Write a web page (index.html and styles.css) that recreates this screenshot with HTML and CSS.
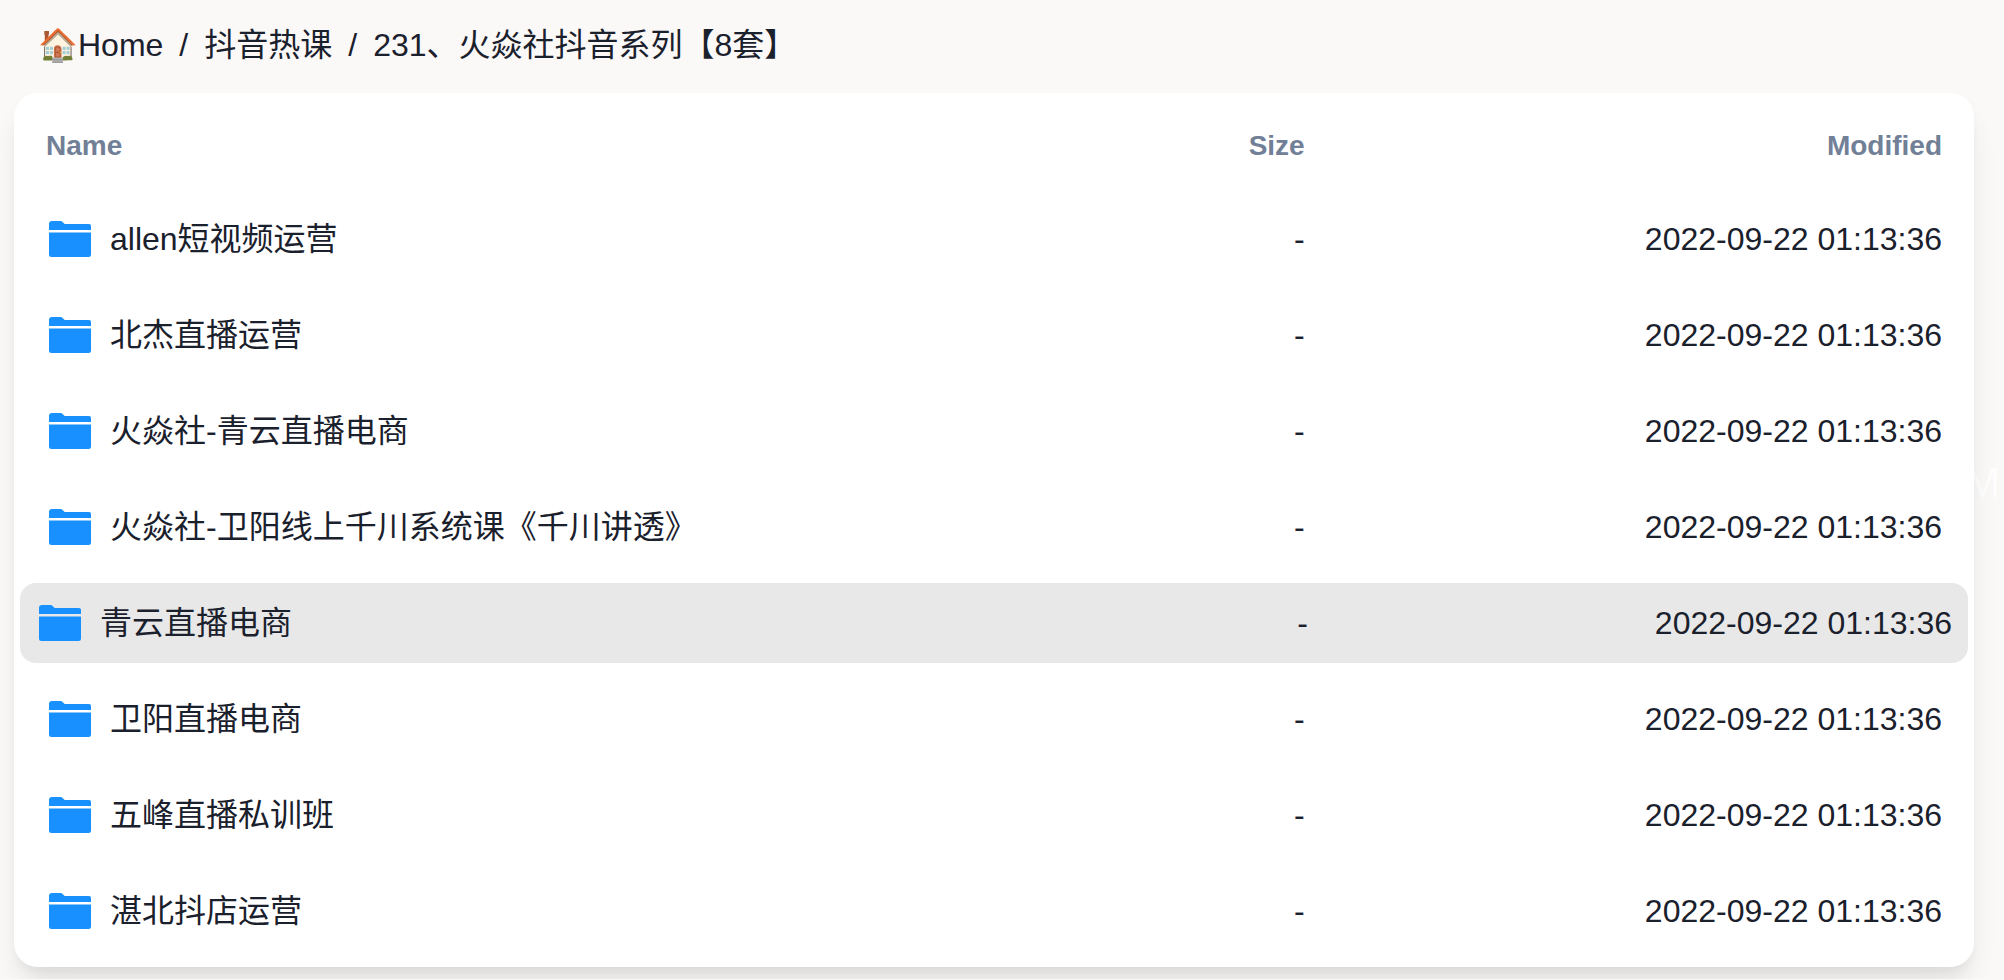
FILE: index.html
```html
<!DOCTYPE html>
<html lang="zh-CN">
<head>
    <meta charset="UTF-8">
    <meta name="viewport" content="width=device-width, initial-scale=1.0">
    <title>231、火焱社抖音系列【8套】</title>
    <link rel="stylesheet" href="styles.css">
</head>
<body>
    <svg width="0" height="0" class="icon-defs" aria-hidden="true">
        <symbol id="folder" viewBox="0 0 48 48">
            <path d="M3 15V9a3 3 0 0 1 3-3h8.500a3 3 0 0 1 2.100 .900L18.700 9H43a2 2 0 0 1 2 2v4z"/>
            <path d="M3 17.500h42V39.500a2.500 2.500 0 0 1-2.500 2.500h-37a2.500 2.500 0 0 1-2.500-2.500z"/>
        </symbol>
    </svg>
    <span class="drift">M</span>

    <div class="container">
        <nav class="breadcrumb">
            <a href="#">🏠Home</a>
            <span>/</span>
            <a href="#">抖音热课</a>
            <span>/</span>
            <a href="#">231、火焱社抖音系列【8套】</a>
        </nav>

        <main class="card">
            <table class="files">
                <thead>
                    <tr>
                        <th>Name</th>
                        <th>Size</th>
                        <th>Modified</th>
                    </tr>
                </thead>
                <tbody>
                    <tr>
                        <td><a href="#"><svg class="icon"><use href="#folder"/></svg>allen短视频运营</a></td>
                        <td>-</td>
                        <td>2022-09-22 01:13:36</td>
                    </tr>
                    <tr>
                        <td><a href="#"><svg class="icon"><use href="#folder"/></svg>北杰直播运营</a></td>
                        <td>-</td>
                        <td>2022-09-22 01:13:36</td>
                    </tr>
                    <tr>
                        <td><a href="#"><svg class="icon"><use href="#folder"/></svg>火焱社-青云直播电商</a></td>
                        <td>-</td>
                        <td>2022-09-22 01:13:36</td>
                    </tr>
                    <tr>
                        <td><a href="#"><svg class="icon"><use href="#folder"/></svg>火焱社-卫阳线上千川系统课《千川讲透》</a></td>
                        <td>-</td>
                        <td>2022-09-22 01:13:36</td>
                    </tr>
                    <tr class="active">
                        <td><a href="#"><svg class="icon"><use href="#folder"/></svg>青云直播电商</a></td>
                        <td>-</td>
                        <td>2022-09-22 01:13:36</td>
                    </tr>
                    <tr>
                        <td><a href="#"><svg class="icon"><use href="#folder"/></svg>卫阳直播电商</a></td>
                        <td>-</td>
                        <td>2022-09-22 01:13:36</td>
                    </tr>
                    <tr>
                        <td><a href="#"><svg class="icon"><use href="#folder"/></svg>五峰直播私训班</a></td>
                        <td>-</td>
                        <td>2022-09-22 01:13:36</td>
                    </tr>
                    <tr>
                        <td><a href="#"><svg class="icon"><use href="#folder"/></svg>湛北抖店运营</a></td>
                        <td>-</td>
                        <td>2022-09-22 01:13:36</td>
                    </tr>
                </tbody>
            </table>
        </main>
    </div>
</body>
</html>
```
FILE: styles.css
```css
* {
    margin: 0;
    padding: 0;
    box-sizing: border-box;
}

body {
    background-color: #faf9f8;
    color: #1a202c;
    font-family: "Liberation Sans", "Noto Sans CJK SC", sans-serif;
    font-size: 32px;
    line-height: 48px;
}

a {
    color: inherit;
    text-decoration: none;
}

.icon-defs {
    position: absolute;
}

.container {
    position: relative;
    padding: 21px 30px 12px 14px;
}

.breadcrumb {
    display: flex;
    gap: 16px;
    padding: 0 24px;
    margin-bottom: 24px;
}

.card {
    padding: 16px;
    background: white;
    border-radius: 24px;
    box-shadow: 0 20px 30px -6px rgba(0,0,0,0.1), 0 8px 12px -4px rgba(0,0,0,0.05);
}

.files {
    display: block;
}

.files thead {
    display: block;
    margin-bottom: 16px;
}

.files tbody {
    display: grid;
    gap: 16px;
}

.files tr {
    display: grid;
    grid-template-columns: 60fr 19fr 40fr;
    padding: 16px;
    border-radius: 16px;
}

.files th {
    color: #718096;
    font-size: 28px;
    line-height: 42px;
    text-align: right;
}

.files td {
    text-align: right;
}

.files th:first-child,
.files td:first-child {
    text-align: left;
}

.files td a {
    display: flex;
    align-items: center;
    gap: 16px;
}

.icon {
    width: 48px;
    height: 48px;
    fill: #1890ff;
}

.files tbody tr:hover,
.files tbody tr.active {
    margin: 0 -10px;
    background: #e8e8e8;
}

/* letter drifting behind the list */
.drift {
    position: absolute;
    top: 459px;
    right: 4px;
    color: #fefefe;
    font-size: 42px;
}
```
